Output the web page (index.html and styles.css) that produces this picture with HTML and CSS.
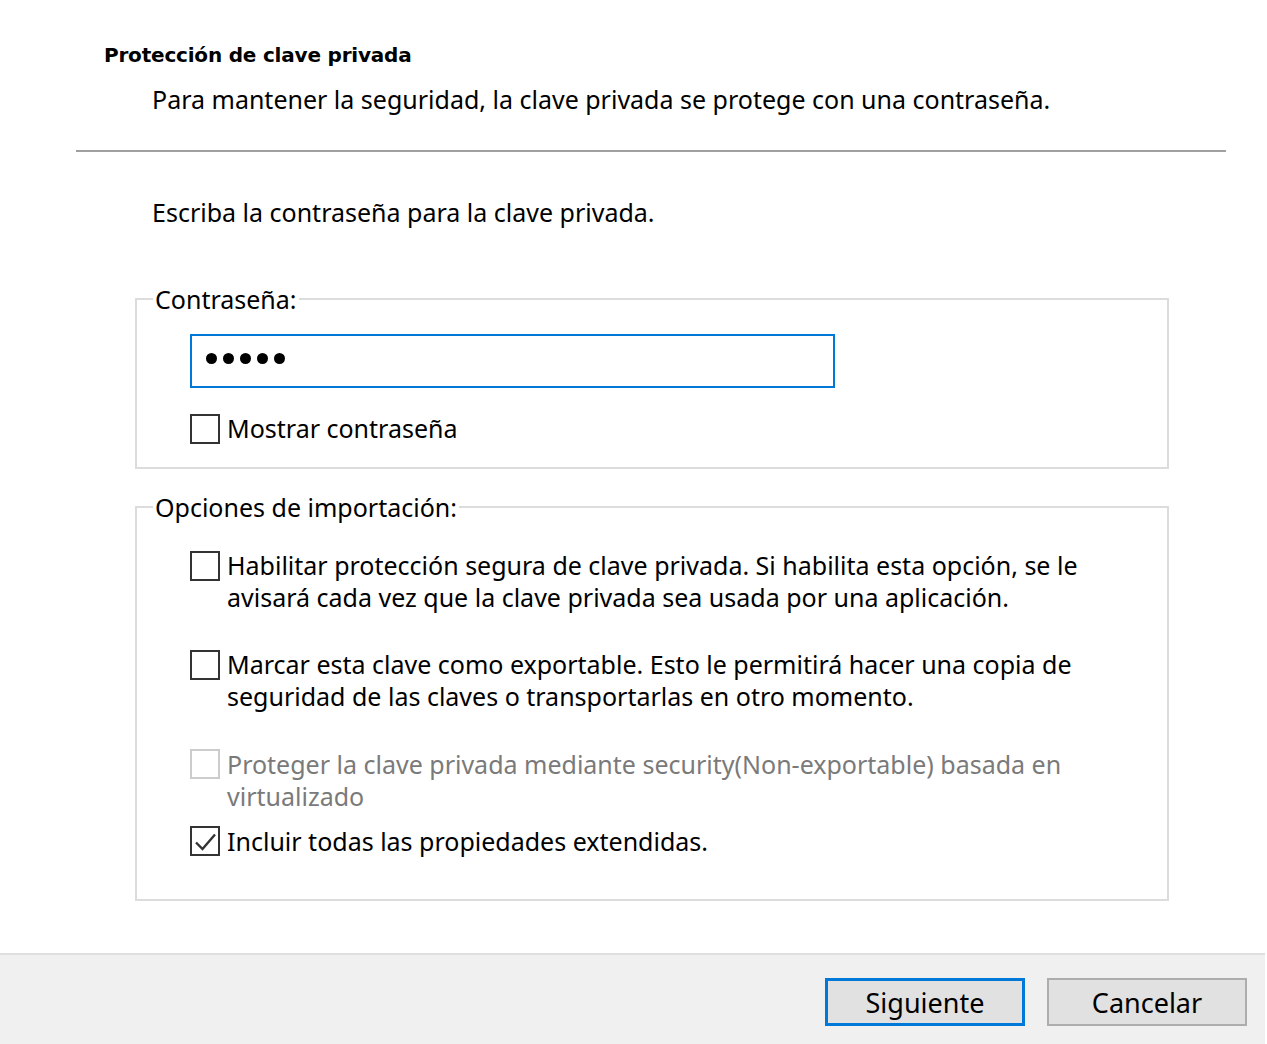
FILE: index.html
```html
<!DOCTYPE html>
<html lang="es">
<head>
<meta charset="utf-8">
<title>Protección de clave privada</title>
<link rel="stylesheet" href="styles.css">
</head>
<body>
<div class="dialog">
  <div class="header">
    <div class="title">Protección de clave privada</div>
    <div class="subtitle">Para mantener la seguridad, la clave privada se protege con una contraseña.</div>
  </div>
  <div class="separator"></div>
  <div class="content">
    <div class="intro">Escriba la contraseña para la clave privada.</div>
    <fieldset class="group group-pass">
      <legend class="legend">Contraseña:</legend>
      <div class="group-body pass-body">
        <div class="textbox">
          <span class="dot"></span><span class="dot"></span><span class="dot"></span><span class="dot"></span><span class="dot"></span>
        </div>
        <div class="check-row row-show">
          <span class="box"></span>
          <span class="label">Mostrar contraseña</span>
        </div>
      </div>
    </fieldset>
    <fieldset class="group group-opts">
      <legend class="legend">Opciones de importación:</legend>
      <div class="group-body opts-body">
        <div class="check-row opt opt1">
          <span class="box"></span>
          <span class="label">Habilitar protección segura de clave privada. Si habilita esta opción, se le<br>avisará cada vez que la clave privada sea usada por una aplicación.</span>
        </div>
        <div class="check-row opt opt2">
          <span class="box"></span>
          <span class="label">Marcar esta clave como exportable. Esto le permitirá hacer una copia de<br>seguridad de las claves o transportarlas en otro momento.</span>
        </div>
        <div class="check-row opt opt3 disabled">
          <span class="box"></span>
          <span class="label">Proteger la clave privada mediante security(Non-exportable) basada en<br>virtualizado</span>
        </div>
        <div class="check-row opt opt4">
          <span class="box checked"><svg width="26" height="26" viewBox="0 0 26 26"><path d="M4 14.5 L10.5 21 L23 6.5" fill="none" stroke="#333" stroke-width="2.4"/></svg></span>
          <span class="label">Incluir todas las propiedades extendidas.</span>
        </div>
      </div>
    </fieldset>
  </div>
  <div class="footer">
    <button class="btn btn-primary">Siguiente</button>
    <button class="btn">Cancelar</button>
  </div>
</div>
</body>
</html>
```
FILE: styles.css
```css
* { box-sizing: border-box; }
html, body { margin: 0; padding: 0; background: #fff; }
body {
  width: 1267px;
  height: 1044px;
  overflow: hidden;
  font-family: "Noto Sans", "Open Sans", sans-serif;
  font-size: 25px;
  color: #000;
}
.dialog { display: flex; flex-direction: column; height: 1044px; }
.header { padding-left: 104px; }
.title {
  margin-top: 43px;
  font-family: "DejaVu Sans", sans-serif;
  font-weight: bold;
  font-size: 20px;
  line-height: 24px;
  letter-spacing: -0.2px;
}
.subtitle {
  margin-top: 16px;
  margin-left: 48px;
  line-height: 32px;
  white-space: nowrap;
}
.separator {
  margin: 35px 0 0 76px;
  width: 1150px;
  height: 2px;
  background: #a0a0a0;
}
.content { padding-left: 135px; flex: 1; }
.intro { margin: 44px 0 0 17px; line-height: 32px; }
.group {
  margin: 0;
  padding: 0;
  width: 1034px;
  border: 2px solid #dcdcdc;
  min-width: 0;
}
.group-pass { margin-top: 55px; }
.group-opts { margin-top: 22px; }
.legend {
  margin-left: 16px;
  padding: 0 2px;
  line-height: 32px;
}
.group-body { padding-left: 53px; }
.pass-body { padding-top: 19px; padding-bottom: 23px; }
.textbox {
  width: 645px;
  height: 54px;
  border: 2px solid #0078d7;
  display: flex;
  align-items: center;
  gap: 6px;
  padding-left: 14px;
  padding-bottom: 5px;
}
.dot {
  width: 11px;
  height: 11px;
  border-radius: 50%;
  background: #000;
}
.check-row { display: flex; align-items: flex-start; }
.row-show { margin-top: 26px; align-items: center; }
.row-show .label { margin-top: -3px; }
.box {
  flex: none;
  width: 30px;
  height: 30px;
  border: 2px solid #333;
  background: #fff;
  margin-right: 7px;
  display: flex;
  align-items: center;
  justify-content: center;
}
.label { line-height: 32px; white-space: nowrap; }
.opt .box { margin-top: 2px; }
.opts-body { padding-top: 26px; padding-bottom: 42px; }
.opt2 { margin-top: 35px; }
.opt3 { margin-top: 36px; }
.opt4 { margin-top: 13px; }
.opt3 .box { margin-top: 1px; }
.opt4 .box { margin-top: 1px; }
.disabled .box { border-color: #cccccc; }
.disabled .label { color: #7a7a7a; }
.footer {
  margin-right: 2px;
  height: 91px;
  border-top: 2px solid #dfdfdf;
  background: #f0f0f0;
  display: flex;
  justify-content: flex-end;
  align-items: flex-start;
  gap: 22px;
  padding: 23px 18px 0 0;
}
.btn {
  width: 200px;
  height: 48px;
  background: #e1e1e1;
  border: 2px solid #adadad;
  font-family: "Noto Sans", "Open Sans", sans-serif;
  font-size: 27px;
  color: #000;
  padding: 0;
  line-height: 1;
}
.btn-primary { border: 3px solid #0078d7; }
```
